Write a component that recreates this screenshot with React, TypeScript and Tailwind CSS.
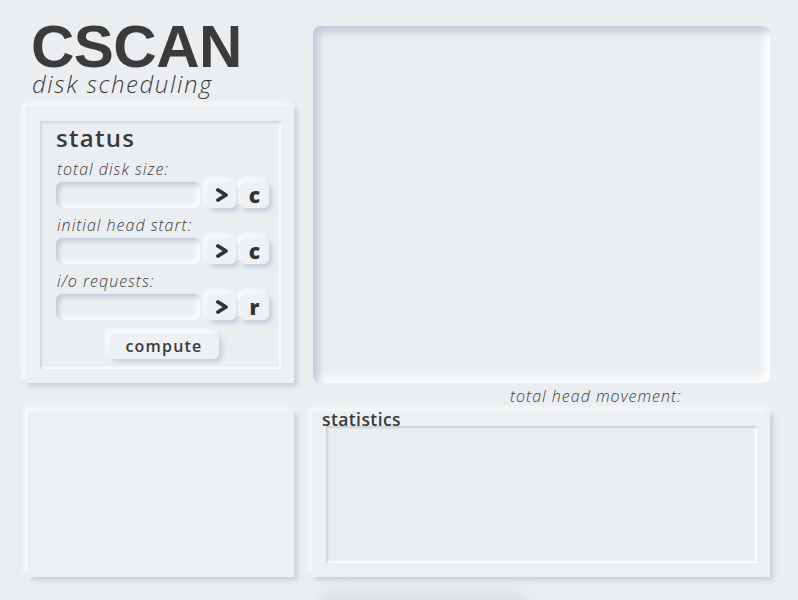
import React from "react";

const raised =
  "shadow-[3px_3px_5px_rgba(163,177,198,0.55),-3px_-3px_5px_rgba(255,255,255,0.85)]";

function Chevron() {
  return (
    <svg width="14" height="14" viewBox="0 0 14 14">
      <polyline
        points="3,2 11,7 3,12"
        fill="none"
        stroke="#333232"
        strokeWidth="3.8"
        strokeLinejoin="round"
        strokeLinecap="round"
      />
    </svg>
  );
}

function SmallBtn({ children }: { children: React.ReactNode }) {
  return (
    <div
      className={`w-[29px] h-[26px] rounded-[5px] bg-[#eef1f4] flex items-center justify-center text-[#333232] text-[21px] font-extrabold leading-none ${raised}`}
      style={{ fontFamily: '"Open Sans", "Liberation Sans", sans-serif' }}
    >
      {children}
    </div>
  );
}

function Field({ label, letter }: { label: string; letter: string }) {
  return (
    <div className="flex flex-col">
      <div className="mt-[7px] h-[20px] leading-[20px] text-[16px] italic font-light text-[#3b3a3a] pl-[1px] tracking-[1px]">
        {label}
      </div>
      <div className="mt-[3px] flex items-center h-[26px]">
        <div className="w-[144px] h-[26px] rounded-[6px] bg-[#eceff2] shadow-[inset_3px_3px_5px_rgba(163,177,198,0.6),inset_-3px_-3px_5px_rgba(255,255,255,0.9)]" />
        <div className="ml-[7px]">
          <SmallBtn>
            <Chevron />
          </SmallBtn>
        </div>
        <div className="ml-[4px]">
          <SmallBtn>{letter}</SmallBtn>
        </div>
      </div>
    </div>
  );
}

export default function App() {
  const sans = { fontFamily: '"Open Sans", "Liberation Sans", sans-serif' };
  return (
    <div className="w-[798px] h-[600px] overflow-hidden bg-[#ebeef1] text-[#3b3a3a]" style={sans}>
      <div className="flex pl-[26px]">
        {/* left column */}
        <div className="w-[268px] flex flex-col">
          <div
            className="mt-[25px] ml-[5px] h-[44px] text-[60px] leading-[44px] font-bold text-[#3d3b3a] tracking-[-0.5px]"
            style={{ fontFamily: '"Liberation Sans", Arial, sans-serif' }}
          >
            CSCAN
          </div>
          <div className="mt-[4px] ml-[6px] h-[22px] text-[24px] leading-[22px] italic font-light text-[#3b3a3a] tracking-[1.6px]">
            disk scheduling
          </div>
          <div className={`mt-[11px] h-[277px] bg-[#edf0f3] pt-[15px] pl-[14px] pr-[13px] pb-[14px] ${raised}`}>
            <div className="h-full bg-[#ebeef1] shadow-[inset_2px_2px_2px_rgba(190,200,212,0.55),inset_-2px_-2px_2px_rgba(255,255,255,0.8)] pl-[16px] pt-[3px] flex flex-col">
              <div className="h-[28px] leading-[28px] text-[24px] font-semibold text-[#3b3a3a] tracking-[1.3px]">status</div>
              <Field label="total disk size:" letter="c" />
              <Field label="initial head start:" letter="c" />
              <Field label="i/o requests:" letter="r" />
              <div className="mt-[13px] pl-[53px]">
                <div
                  className={`w-[110px] h-[26px] rounded-[6px] bg-[#eef1f4] flex items-center justify-center text-[16px] font-semibold text-[#3b3a3a] tracking-[1.2px] ${raised}`}
                >
                  compute
                </div>
              </div>
            </div>
          </div>
        </div>
        {/* right main panel */}
        <div className="ml-[19px] mt-[26px] w-[457px] h-[357px] rounded-[7px] bg-[#ebeef1] shadow-[inset_6px_6px_7px_rgba(163,177,198,0.55),inset_-6px_-6px_7px_rgba(255,255,255,0.9)]" />
      </div>

      <div className="h-[28px] pl-[510px] pt-[3px] text-[16px] leading-[20px] italic font-light text-[#3b3a3a] tracking-[1px]">
        total head movement:
      </div>

      <div className="flex pl-[28px]">
        <div className={`w-[266px] h-[166px] bg-[#edf0f3] ${raised}`} />
        <div className={`ml-[18px] w-[458px] h-[166px] bg-[#edf0f3] flex flex-col ${raised}`}>
          <div className="h-[15px] pl-[10px] text-[17.5px] leading-[15px] font-semibold text-[#3b3a3a] relative top-[1px] tracking-[0.4px]">
            statistics
          </div>
          <div className="ml-[14px] w-[431px] h-[137px] bg-[#ebeef1] shadow-[inset_2px_2px_2px_rgba(180,192,206,0.6),inset_-2px_-2px_2px_rgba(255,255,255,0.85)]" />
        </div>
      </div>

      <div className="mt-[13px] ml-[315px] w-[215px] h-[40px] rounded-[20px] bg-[#dde2e7] blur-[6px]" />
    </div>
  );
}
